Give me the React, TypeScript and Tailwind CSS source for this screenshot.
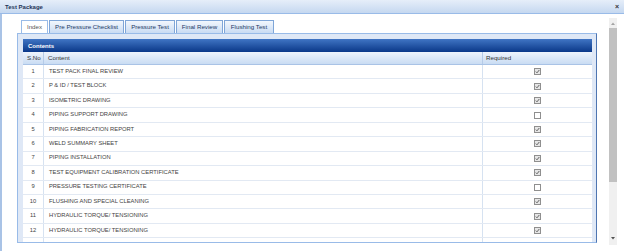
import React from "react";

type Row = [string, string, boolean];

const rows: Row[] = [
  ["1", "TEST PACK FINAL REVIEW", true],
  ["2", "P & ID / TEST BLOCK", true],
  ["3", "ISOMETRIC DRAWING", true],
  ["4", "PIPING SUPPORT DRAWING", false],
  ["5", "PIPING FABRICATION REPORT", true],
  ["6", "WELD SUMMARY SHEET", true],
  ["7", "PIPING INSTALLATION", true],
  ["8", "TEST EQUIPMENT CALIBRATION CERTIFICATE", true],
  ["9", "PRESSURE TESTING CERTIFICATE", false],
  ["10", "FLUSHING AND SPECIAL CLEANING", true],
  ["11", "HYDRAULIC TORQUE/ TENSIONING", true],
  ["12", "HYDRAULIC TORQUE/ TENSIONING", true],
];

function Check({ on }: { on: boolean }) {
  return (
    <div
      className={
        "w-[7px] h-[7px] border border-[#8f8f8f] flex items-center justify-center " +
        (on ? "bg-[#e6e6e6]" : "bg-white")
      }
    >
      {on && (
        <svg width="5" height="5" viewBox="0 0 5 5">
          <path d="M0.8 2.6 L2 3.8 L4.3 1" stroke="#555" strokeWidth="0.9" fill="none" />
        </svg>
      )}
    </div>
  );
}

const tabs = [
  { label: "Index", w: "w-[27px]", active: true },
  { label: "Pre Pressure Checklist", w: "w-[75px]", active: false },
  { label: "Pressure Test", w: "w-[50px]", active: false },
  { label: "Final Review", w: "w-[47px]", active: false },
  { label: "Flushing Test", w: "w-[50px]", active: false },
];

export default function App() {
  return (
    <div className="w-[624px] h-[251px] overflow-hidden bg-white flex flex-col font-['Liberation_Sans',Arial,sans-serif]">
      {/* Title bar */}
      <div className="h-[14px] shrink-0 border-b border-[#99bbe8] bg-gradient-to-b from-[#e6eef9] to-[#c5d8f0] flex items-center justify-between pl-[5px] pr-[5px]">
        <span className="text-[6px] font-bold text-[#1f3558] leading-none">Test Package</span>
        <span className="text-[7px] font-bold text-[#333] leading-none">×</span>
      </div>

      {/* Body */}
      <div className="flex flex-1 min-h-0 border-l-2 border-[#a9c3e6]">
        <div className="w-[595px] h-[229px] overflow-hidden pl-[15px] pt-[6px] flex flex-col">
          {/* Tabs */}
          <div className="h-[13px] shrink-0 ml-[4px] flex gap-[1px] items-end">
            {tabs.map((t) => (
              <div
                key={t.label}
                className={
                  t.w +
                  " h-[13px] border border-b-0 flex items-center justify-center text-[6.2px] leading-none whitespace-nowrap " +
                  (t.active
                    ? "bg-white border-[#99bbe8] text-[#555]"
                    : "bg-gradient-to-b from-[#f2f7fd] to-[#cadcf3] border-[#7fa6d8] text-[#1e3a66]")
                }
              >
                {t.label}
              </div>
            ))}
          </div>

          {/* Panel */}
          <div className="flex-1 min-h-0 border border-[#99bbe8] border-r-[#4d75b2] bg-[#dfe8f6] pt-[5px] pl-[5px] pr-[4px] overflow-hidden">
            <div className="w-[569px] flex flex-col">
              <div className="h-[13px] bg-gradient-to-b from-[#4075c4] to-[#0a3889] flex items-center pl-[5px]">
                <span className="text-[6px] font-bold text-white leading-none">Contents</span>
              </div>
              <div className="h-[13px] flex bg-gradient-to-b from-[#eef4fc] to-[#c9dcf3] border-b border-[#a9c3e6] text-[6.2px] text-[#333] leading-none">
                <div className="w-[21px] border-r border-[#b5cbe8] flex items-center pl-[4px]">S.No</div>
                <div className="w-[439px] border-r border-[#b5cbe8] flex items-center pl-[4px]">Content</div>
                <div className="flex-1 flex items-center pl-[3px]">Required</div>
              </div>
              {rows.map(([n, c, on]) => (
                <div
                  key={n + c}
                  className="h-[14.45px] shrink-0 flex bg-white border-b border-[#e2e9f3] text-[5.8px] text-[#444] leading-none"
                >
                  <div className="w-[21px] border-r border-[#d6e2f1] flex items-center justify-center">{n}</div>
                  <div className="w-[439px] border-r border-[#d6e2f1] flex items-center pl-[5px] whitespace-nowrap">{c}</div>
                  <div className="flex-1 flex items-center justify-center">
                    <Check on={on} />
                  </div>
                </div>
              ))}
              <div className="h-[14.45px] shrink-0 flex bg-white">
                <div className="w-[21px] border-r border-[#d6e2f1]" />
                <div className="w-[439px] border-r border-[#d6e2f1]" />
                <div className="flex-1 flex items-center justify-center">
                  <Check on={true} />
                </div>
              </div>
            </div>
          </div>
        </div>

        {/* Scrollbar */}
        <div className="ml-[12px] mt-[4px] w-[8px] h-[227px] bg-[#f0f0f0] flex flex-col">
          <div className="h-[10px] flex items-center justify-center">
            <svg width="4" height="3" viewBox="0 0 4 3">
              <path d="M0 3 L2 0.5 L4 3 Z" fill="#a3a3a3" />
            </svg>
          </div>
          <div className="h-[154px] bg-[#c1c1c1]" />
          <div className="flex-1" />
          <div className="h-[13px] flex items-center justify-center">
            <svg width="4" height="3" viewBox="0 0 4 3">
              <path d="M0 0 L4 0 L2 2.5 Z" fill="#505050" />
            </svg>
          </div>
        </div>
      </div>
    </div>
  );
}
